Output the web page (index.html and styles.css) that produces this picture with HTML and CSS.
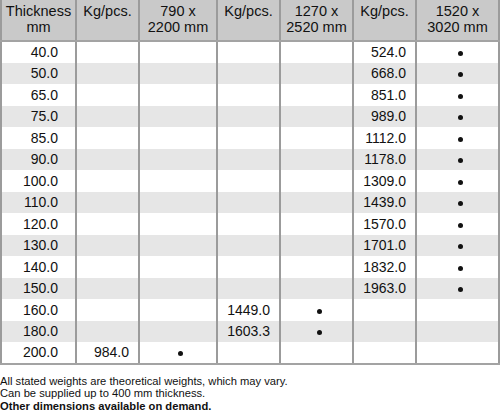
FILE: index.html
```html
<!DOCTYPE html>
<html>
<head>
<meta charset="utf-8">
<link rel="stylesheet" href="styles.css">
</head>
<body>
<table class="spec">
  <colgroup>
    <col class="c-thick"><col class="c-kg"><col class="c-dim1"><col class="c-kg"><col class="c-dim2"><col class="c-kg"><col class="c-dim3">
  </colgroup>
  <thead>
    <tr>
      <th>Thickness<br>mm</th>
      <th>Kg/pcs.</th>
      <th>790 x<br>2200 mm</th>
      <th>Kg/pcs.</th>
      <th>1270 x<br>2520 mm</th>
      <th>Kg/pcs.</th>
      <th>1520 x<br>3020 mm</th>
    </tr>
  </thead>
  <tbody>
    <tr><td class="t">40.0</td><td class="n"></td><td class="d"></td><td class="n"></td><td class="d"></td><td class="n">524.0</td><td class="d"><span class="dot"></span></td></tr>
    <tr><td class="t">50.0</td><td class="n"></td><td class="d"></td><td class="n"></td><td class="d"></td><td class="n">668.0</td><td class="d"><span class="dot"></span></td></tr>
    <tr><td class="t">65.0</td><td class="n"></td><td class="d"></td><td class="n"></td><td class="d"></td><td class="n">851.0</td><td class="d"><span class="dot"></span></td></tr>
    <tr><td class="t">75.0</td><td class="n"></td><td class="d"></td><td class="n"></td><td class="d"></td><td class="n">989.0</td><td class="d"><span class="dot"></span></td></tr>
    <tr><td class="t">85.0</td><td class="n"></td><td class="d"></td><td class="n"></td><td class="d"></td><td class="n">1112.0</td><td class="d"><span class="dot"></span></td></tr>
    <tr><td class="t">90.0</td><td class="n"></td><td class="d"></td><td class="n"></td><td class="d"></td><td class="n">1178.0</td><td class="d"><span class="dot"></span></td></tr>
    <tr><td class="t">100.0</td><td class="n"></td><td class="d"></td><td class="n"></td><td class="d"></td><td class="n">1309.0</td><td class="d"><span class="dot"></span></td></tr>
    <tr><td class="t">110.0</td><td class="n"></td><td class="d"></td><td class="n"></td><td class="d"></td><td class="n">1439.0</td><td class="d"><span class="dot"></span></td></tr>
    <tr><td class="t">120.0</td><td class="n"></td><td class="d"></td><td class="n"></td><td class="d"></td><td class="n">1570.0</td><td class="d"><span class="dot"></span></td></tr>
    <tr><td class="t">130.0</td><td class="n"></td><td class="d"></td><td class="n"></td><td class="d"></td><td class="n">1701.0</td><td class="d"><span class="dot"></span></td></tr>
    <tr><td class="t">140.0</td><td class="n"></td><td class="d"></td><td class="n"></td><td class="d"></td><td class="n">1832.0</td><td class="d"><span class="dot"></span></td></tr>
    <tr><td class="t">150.0</td><td class="n"></td><td class="d"></td><td class="n"></td><td class="d"></td><td class="n">1963.0</td><td class="d"><span class="dot"></span></td></tr>
    <tr><td class="t">160.0</td><td class="n"></td><td class="d"></td><td class="n">1449.0</td><td class="d"><span class="dot"></span></td><td class="n"></td><td class="d"></td></tr>
    <tr><td class="t">180.0</td><td class="n"></td><td class="d"></td><td class="n">1603.3</td><td class="d"><span class="dot"></span></td><td class="n"></td><td class="d"></td></tr>
    <tr><td class="t">200.0</td><td class="n">984.0</td><td class="d"><span class="dot"></span></td><td class="n"></td><td class="d"></td><td class="n"></td><td class="d"></td></tr>
  </tbody>
</table>
<div class="notes">
  <p>All stated weights are theoretical weights, which may vary.</p>
  <p>Can be supplied up to 400 mm thickness.</p>
  <p class="strong">Other dimensions available on demand.</p>
</div>
</body>
</html>
```

FILE: styles.css
```css
html, body {
  margin: 0;
  padding: 0;
  background: #ffffff;
}
body {
  font-family: "Liberation Sans", Arial, sans-serif;
  color: #111111;
}
.spec {
  border-collapse: collapse;
  table-layout: fixed;
  width: 498px;
  font-size: 14px;
}
.c-thick { width: 75px; }
.c-kg { width: 63px; }
.c-dim1 { width: 78px; }
.c-dim2 { width: 73px; }
.c-dim3 { width: 83px; }

.spec th {
  background: #c9c9c9;
  font-weight: normal;
  font-size: 14.5px;
  line-height: 16px;
  height: 41px;
  padding: 3px 0 0 0;
  vertical-align: top;
  text-align: center;
  border-left: 2px solid #9b9b9b;
  border-right: 2px solid #9b9b9b;
  border-bottom: 2px solid #a3a3a3;
  box-sizing: border-box;
}
.spec td {
  height: 21.5px;
  padding: 0;
  line-height: 16px;
  vertical-align: middle;
  border-left: 2px solid #9b9b9b;
  border-right: 2px solid #9b9b9b;
  box-sizing: border-box;
}
.spec tbody tr:nth-child(even) td {
  background: #e6e6e6;
}
.spec tbody tr:last-child td {
  border-bottom: 2px solid #a3a3a3;
}
.spec td.t {
  text-align: right;
  padding-right: 17px;
}
.spec td.n {
  text-align: right;
  padding-right: 9px;
}
.spec td.d {
  text-align: center;
  padding-left: 5px;
}
.dot {
  display: inline-block;
  width: 5px;
  height: 5px;
  border-radius: 50%;
  background: #111111;
  vertical-align: middle;
}
.notes {
  margin-top: 10px;
  font-size: 11.2px;
  line-height: 12.7px;
  color: #111111;
}
.notes p {
  margin: 0;
}
.notes .strong {
  font-weight: bold;
}
```
